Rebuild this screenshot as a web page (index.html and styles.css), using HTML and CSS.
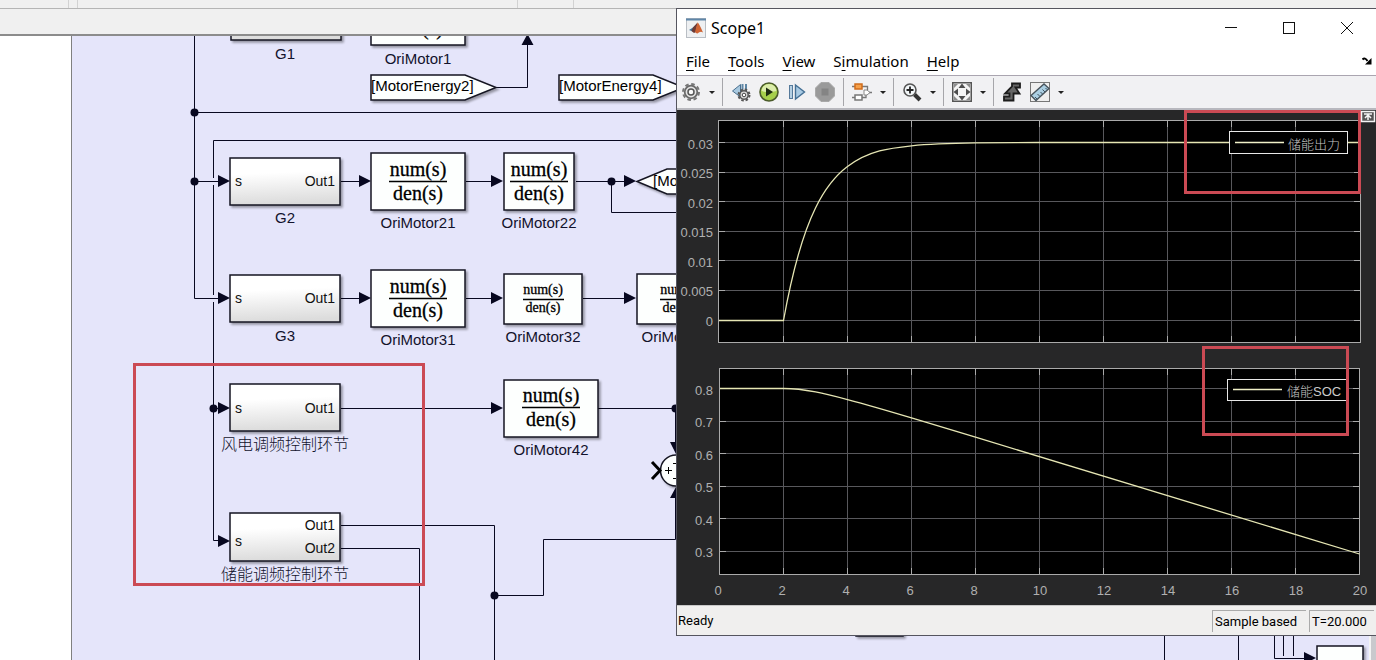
FILE: index.html
```html
<!DOCTYPE html>
<html lang="zh-CN">
<head>
    <meta charset="UTF-8">
    <meta name="viewport" content="width=device-width, initial-scale=1.0">
    <title>Scope1</title>
    <link rel="stylesheet" href="styles.css">
</head>
<body>
    <div class="editor">
        <header class="top-strip">
            <span class="strip-cell cell-a"></span>
            <span class="strip-cell cell-b"></span>
            <span class="strip-cell cell-c"></span>
            <span class="strip-cell cell-d"></span>
        </header>
        <div class="path-bar"></div>

        <div class="workspace">
            <aside class="palette"></aside>
            <main class="canvas">
                <svg class="diagram" role="img" aria-label="Model">
                    <defs>
                        <linearGradient id="blockFill" x1="0" y1="0" x2="0.1" y2="1">
                            <stop offset="0.35" stop-color="#ffffff"/>
                            <stop offset="1" stop-color="#dcdcdc"/>
                        </linearGradient>
                        <path id="arrowRight" d="M0 0L-12 -6V6Z"/>
                    </defs>
                    <g transform="translate(-72 -36)">
                        <!-- signal lines -->
                        <g class="wires">
                            <path d="M213.5 540.5V140.5H700M213.5 540.5H220"/>
                            <path class="gap" d="M213.5 178V185M213.5 295V302"/>
                            <path d="M194.5 30V298.5H220M194.5 112.5H700M194.5 181.5H220"/>
                            <path d="M496 87.5H527.5V40"/>
                            <path d="M341 181.5H362M466 181.5H495M576 181.5H628M611.5 181.5V212.5H700"/>
                            <path d="M341 298.5H362M466 298.5H495M583 298.5H628"/>
                            <path d="M213 408.5H220M341 408.5H495M598 408.5H675.5V446"/>
                            <path d="M341 525.5H494.5V1400M341 548.5H419.5V1400"/>
                            <path d="M494.5 595.5H543.5V539.5H675.5V494"/>
                            <path d="M1164.5 620V1400M1238.5 620V1400M1274.5 620V658.5H1306M1283.5 620V656M1293.5 620V656"/>
                        </g>
                        <g class="solid">
                            <circle cx="194.5" cy="112.5" r="4"/>
                            <circle cx="194.5" cy="181.5" r="4"/>
                            <circle cx="611.5" cy="181.5" r="4"/>
                            <circle cx="213.5" cy="408.5" r="4"/>
                            <circle cx="675.5" cy="408.5" r="4"/>
                            <circle cx="494.5" cy="595.5" r="4"/>
                            <use href="#arrowRight" x="230" y="181"/>
                            <use href="#arrowRight" x="230" y="298"/>
                            <use href="#arrowRight" x="230" y="408"/>
                            <use href="#arrowRight" x="230" y="541"/>
                            <use href="#arrowRight" x="371" y="181"/>
                            <use href="#arrowRight" x="371" y="298"/>
                            <use href="#arrowRight" x="503" y="181"/>
                            <use href="#arrowRight" x="503" y="298"/>
                            <use href="#arrowRight" x="503" y="408"/>
                            <use href="#arrowRight" x="636" y="181"/>
                            <use href="#arrowRight" x="636" y="298"/>
                            <use href="#arrowRight" x="1316" y="658"/>
                            <path d="M527.500 34L521.500 45H533.500ZM676 454L670 442H682ZM676 487L670 498H682Z"/>
                        </g>

                        <!-- subsystem blocks -->
                        <g class="block subsystem">
                            <rect x="231" y="-7" width="110" height="47"/>
                            <rect x="230" y="158" width="110" height="47"/>
                            <rect x="230" y="275" width="110" height="47"/>
                            <rect x="230" y="384" width="110" height="47"/>
                            <rect x="230" y="513" width="110" height="48"/>
                        </g>
                        <g class="port">
                            <text x="235" y="186">s</text>
                            <text x="235" y="303">s</text>
                            <text x="235" y="413">s</text>
                            <text x="235" y="546">s</text>
                            <g class="end">
                                <text x="335" y="186">Out1</text>
                                <text x="335" y="303">Out1</text>
                                <text x="335" y="413">Out1</text>
                                <text x="335" y="530">Out1</text>
                                <text x="335" y="553">Out2</text>
                            </g>
                        </g>

                        <!-- transfer functions -->
                        <g class="block">
                            <rect x="371" y="-12" width="94" height="57"/>
                            <rect x="371" y="153" width="94" height="57"/>
                            <rect x="504" y="153" width="70" height="57"/>
                            <rect x="371" y="270" width="94" height="57"/>
                            <rect x="504" y="274" width="78" height="50"/>
                            <rect x="637" y="274" width="78" height="50"/>
                            <rect x="504" y="380" width="94" height="57"/>
                            <rect x="856" y="590" width="47" height="46"/>
                            <rect x="1317" y="646" width="46" height="46"/>
                            <path d="M371 75H465L496 87.500L465 100H371Z"/>
                            <path d="M559 75H653L684 87.500L653 100H559Z"/>
                            <path d="M637 181.500L667 169H720V194H667Z"/>
                            <circle cx="676" cy="470.500" r="15.500"/>
                        </g>
                        <g class="fraction">
                            <text x="418" y="35">den(s)</text>
                            <text x="418" y="176">num(s)</text>
                            <text x="418" y="200">den(s)</text>
                            <text x="539" y="176">num(s)</text>
                            <text x="539" y="200">den(s)</text>
                            <text x="418" y="293">num(s)</text>
                            <text x="418" y="317">den(s)</text>
                            <text x="551" y="402">num(s)</text>
                            <text x="551" y="426">den(s)</text>
                            <g class="small">
                                <text x="543" y="294">num(s)</text>
                                <text x="543" y="312">den(s)</text>
                                <text x="680" y="294">num(s)</text>
                                <text x="680" y="312">den(s)</text>
                            </g>
                            <path d="M389 181.500H447M510 181.500H568M389 298.500H447M522 407.500H580M523 299.500H564M660 299.500H701"/>
                        </g>
                        <g class="tag">
                            <text x="371" y="91">[MotorEnergy2]</text>
                            <text x="559" y="91">[MotorEnergy4]</text>
                            <text x="653" y="186">[MotorEnergy2]</text>
                        </g>
                        <path class="open-port" d="M652 462L660 470.500L652 479"/>
                        <path class="signs" d="M665 470.500H672M668.500 467V474M673 463.500H680M673 478.500H680"/>

                        <g class="name">
                            <text x="285" y="59">G1</text>
                            <text x="285" y="223">G2</text>
                            <text x="285" y="341">G3</text>
                            <text x="418" y="64">OriMotor1</text>
                            <text x="418" y="228">OriMotor21</text>
                            <text x="539" y="228">OriMotor22</text>
                            <text x="418" y="345">OriMotor31</text>
                            <text x="543" y="342">OriMotor32</text>
                            <text x="679" y="342">OriMotor33</text>
                            <text x="551" y="455">OriMotor42</text>
                            <text class="cjk" x="285" y="450">风电调频控制环节</text>
                            <text class="cjk" x="285" y="580">储能调频控制环节</text>
                        </g>
                        <rect class="mark" x="134.5" y="364.5" width="289" height="220"/>
                    </g>
                </svg>
            </main>
            <div class="scrollbar"></div>
        </div>
    </div>

    <section class="scope">
        <div class="title-bar">
            <svg class="app-icon" width="20" height="20" viewBox="0 0 20 20">
                <rect x="0.5" y="0.5" width="19" height="19" fill="#eef0f2" stroke="#b9bec4"/>
                <path d="M0 1.500H20" stroke="#5f86a8" stroke-width="2"/>
                <path d="M3 12L7 9.500L9.500 7L8 14Z" fill="#3f7399"/>
                <path d="M7 9.500L11.500 4.500L10 14L8 15L5.500 13Z" fill="#6d3a35"/>
                <path d="M11.500 4.500Q13 5 17 14.500Q14.500 12.500 11.500 15.500Q10.500 15.500 9 14Z" fill="#cf6434"/>
            </svg>
            <h1>Scope1</h1>
            <div class="window-buttons">
                <button aria-label="Minimize"><svg width="12" height="12"><path d="M0 5.500H12"/></svg></button>
                <button aria-label="Maximize"><svg width="12" height="12"><rect x="0.5" y="0.5" width="11" height="11"/></svg></button>
                <button aria-label="Close"><svg width="12" height="12"><path d="M0 0L12 12M12 0L0 12"/></svg></button>
            </div>
        </div>

        <nav class="menu-bar">
            <button><u>F</u>ile</button>
            <button><u>T</u>ools</button>
            <button><u>V</u>iew</button>
            <button>S<u>i</u>mulation</button>
            <button><u>H</u>elp</button>
            <svg class="undock" width="10" height="8" viewBox="0 0 10 8"><path d="M0.500 2.500Q3 0 5.500 4" fill="none" stroke="#000" stroke-width="2"/><path d="M9.500 1V7.500H3Z"/></svg>
        </nav>

        <div class="toolbar">
            <button class="tool" aria-label="Configuration">
                <svg width="20" height="20" viewBox="0 0 20 20">
                    <circle cx="10" cy="10" r="8" fill="none" stroke="#777" stroke-width="2" stroke-dasharray="3.600 2.683"/>
                    <circle cx="10" cy="10" r="6.300" fill="#e4e4e4" stroke="#6b6b6b" stroke-width="1.800"/>
                    <circle cx="10" cy="10" r="3" fill="#fafafa" stroke="#555" stroke-width="1.500"/>
                </svg>
            </button>
            <button class="caret" aria-label="Configuration menu"></button>
            <span class="separator"></span>
            <button class="tool" aria-label="Step back">
                <svg width="20" height="20" viewBox="0 0 20 20">
                    <path d="M1.500 9L9.500 2.500V15Z" fill="#a8c8df" stroke="#49708f"/>
                    <path d="M11.500 2V9M15 2V9" stroke="#5e86a5" stroke-width="2"/>
                    <circle cx="13" cy="13" r="5.500" fill="none" stroke="#555" stroke-width="2" stroke-dasharray="2.500 1.820"/>
                    <circle cx="13" cy="13" r="4.200" fill="#ddd" stroke="#555" stroke-width="1.500"/>
                    <circle cx="13" cy="13" r="1.800" fill="#fff" stroke="#444"/>
                </svg>
            </button>
            <button class="tool" aria-label="Run">
                <svg width="20" height="20" viewBox="0 0 20 20">
                    <circle cx="10" cy="10" r="9" fill="#a6cf4b" stroke="#4b5b2b" stroke-width="1.600"/>
                    <path d="M2.500 9A7.500 7 0 0 1 17.500 9Q10 11 2.500 9Z" fill="#dcedab"/>
                    <path d="M7 5.500L14 10L7 14.500Z" fill="#1e2b12"/>
                </svg>
            </button>
            <button class="tool" aria-label="Step forward">
                <svg width="20" height="20" viewBox="0 0 20 20">
                    <rect x="2.500" y="3.500" width="3" height="13" fill="#b4cfe3" stroke="#55799a"/>
                    <path d="M8.500 3L17.500 10L8.500 17Z" fill="#a9cae3" stroke="#446f94" stroke-width="1.400"/>
                </svg>
            </button>
            <button class="tool" aria-label="Stop" disabled>
                <svg width="20" height="20" viewBox="0 0 20 20">
                    <path d="M6 0.500H14L19.500 6V14L14 19.500H6L0.500 14V6Z" fill="#9a9a9a" stroke="#a9a9a9"/>
                    <rect x="6.500" y="6.500" width="7" height="7" fill="#848484"/>
                </svg>
            </button>
            <span class="separator"></span>
            <button class="tool" aria-label="Highlight block">
                <svg width="20" height="20" viewBox="0 0 20 20" fill="none">
                    <path d="M0 4.500H3M10 4.500H15.500V8M17 10.500H20M14 12.500V15.500H10M0 15.500H3" stroke="#777" stroke-width="1.300"/>
                    <rect x="3" y="2" width="7" height="5" fill="#f5a04a" stroke="#cf6c1b" stroke-width="1.500"/>
                    <rect x="3" y="13" width="7" height="5" fill="#fff" stroke="#777" stroke-width="1.500"/>
                    <path d="M12 8H15L18 10.500L15 13H12Z" fill="#fff" stroke="#888"/>
                </svg>
            </button>
            <button class="caret" aria-label="Highlight menu"></button>
            <span class="separator"></span>
            <button class="tool" aria-label="Zoom">
                <svg width="20" height="20" viewBox="0 0 20 20" fill="none">
                    <path d="M12.500 12.500L18 18" stroke="#333" stroke-width="4"/>
                    <circle cx="8" cy="8" r="6" fill="#f2f6f8" stroke="#555" stroke-width="1.600"/>
                    <path d="M4.500 8H11.500M8 4.500V11.500" stroke="#222" stroke-width="1.800"/>
                </svg>
            </button>
            <button class="caret" aria-label="Zoom menu"></button>
            <span class="separator"></span>
            <button class="tool" aria-label="Fit to view">
                <svg width="20" height="20" viewBox="0 0 20 20">
                    <rect x="0.750" y="0.750" width="18.500" height="18.500" fill="#f4f4f4" stroke="#555" stroke-width="1.500"/>
                    <path d="M10 1.500L13.500 6H6.500ZM10 18.500L13.500 14H6.500ZM1.500 10L6 6.500V13.500ZM18.500 10L14 6.500V13.500Z" fill="#4d4d4d"/>
                    <path d="M2 2H6L2 6ZM18 2V6L14 2ZM2 18V14L6 18ZM18 18H14L18 14Z" fill="#8c8c8c"/>
                </svg>
            </button>
            <button class="caret" aria-label="Fit menu"></button>
            <span class="separator"></span>
            <button class="tool" aria-label="Triggers">
                <svg width="20" height="20" viewBox="0 0 20 20">
                    <path d="M2 14.500H7.500V11.500H3L10 4.500V1.500H18V5.500H13.500L17.500 11.500H11.500V18.500H2Z" fill="#666" stroke="#1c1c1c" stroke-width="1.800"/>
                </svg>
            </button>
            <button class="tool" aria-label="Cursor measurements">
                <svg width="20" height="20" viewBox="0 0 20 20">
                    <rect x="0.500" y="0.500" width="19" height="19" fill="#efefef" stroke="#777"/>
                    <path d="M1 13.500L14 2L19 6.500L6 18.500Z" fill="#abcfe3" stroke="#47535c" stroke-width="1.400"/>
                    <path d="M7 17L5 15M10 14.500L7.500 12M12.500 12L10.500 10M15 10L12.500 7.500M17 7.500L15.500 6" stroke="#3f5360"/>
                </svg>
            </button>
            <button class="caret" aria-label="Measurements menu"></button>
        </div>

        <div class="plots">
            <svg viewBox="0 0 699 495" role="img" aria-label="Scope display">
                <rect class="axes-fill" x="41.500" y="10.500" width="642" height="222"/>
                <path class="grid" d="M106.500 10V232M170.500 10V232M234.500 10V232M298.500 10V232M362.500 10V232M426.500 10V232M490.500 10V232M554.500 10V232M618.500 10V232
                    M42 32.500H683M42 62.500H683M42 91.500H683M42 121.500H683M42 150.500H683M42 180.500H683M42 210.500H683"/>
                <path class="ticks" d="M106.500 10V17M170.500 10V17M234.500 10V17M298.500 10V17M362.500 10V17M426.500 10V17M490.500 10V17M554.500 10V17M618.500 10V17
                    M106.500 226V232M170.500 226V232M234.500 226V232M298.500 226V232M362.500 226V232M426.500 226V232M490.500 226V232M554.500 226V232M618.500 226V232
                    M42 32.500H48M42 62.500H48M42 91.500H48M42 121.500H48M42 150.500H48M42 180.500H48M42 210.500H48
                    M677 32.500H683M677 62.500H683M677 91.500H683M677 121.500H683M677 150.500H683M677 180.500H683M677 210.500H683"/>
                <rect class="axes" x="41.500" y="10.500" width="642" height="222"/>
                <path class="curve" d="M42 210.500H106.500C117.200 151.200 127.800 119.800 138.500 98S159.800 64.600 170.500 56.600C191.800 40.500 213.200 38 234.500 35.800C255.800 33.600 277.200 33.200 298.500 32.900L362.500 32.500H683"/>

                <rect class="axes-fill" x="42.500" y="258.500" width="640" height="206"/>
                <path class="grid" d="M106.500 259V464M170.500 259V464M234.500 259V464M298.500 259V464M362.500 259V464M426.500 259V464M490.500 259V464M554.500 259V464M618.500 259V464
                    M42 278.500H682M42 311.500H682M42 343.500H682M42 376.500H682M42 408.500H682M42 441.500H682"/>
                <path class="ticks" d="M106.500 259V265M170.500 259V265M234.500 259V265M298.500 259V265M362.500 259V265M426.500 259V265M490.500 259V265M554.500 259V265M618.500 259V265
                    M106.500 458V464M170.500 458V464M234.500 458V464M298.500 458V464M362.500 458V464M426.500 458V464M490.500 458V464M554.500 458V464M618.500 458V464
                    M43 278.500H49M43 311.500H49M43 343.500H49M43 376.500H49M43 408.500H49M43 441.500H49
                    M676 278.500H682M676 311.500H682M676 343.500H682M676 376.500H682M676 408.500H682M676 441.500H682"/>
                <rect class="axes" x="42.500" y="258.500" width="640" height="206"/>
                <path class="curve" d="M43 278.500H106.500C127.800 278.500 149.200 284 170.500 289.600S213.200 301.500 234.500 307.900L298.500 327.200L682.500 444"/>

                <g class="tick-label end">
                    <text x="36" y="39">0.03</text>
                    <text x="36" y="68">0.025</text>
                    <text x="36" y="98">0.02</text>
                    <text x="36" y="127">0.015</text>
                    <text x="36" y="157">0.01</text>
                    <text x="36" y="186">0.005</text>
                    <text x="36" y="216">0</text>
                    <text x="36" y="285">0.8</text>
                    <text x="36" y="317">0.7</text>
                    <text x="36" y="350">0.6</text>
                    <text x="36" y="382">0.5</text>
                    <text x="36" y="415">0.4</text>
                    <text x="36" y="447">0.3</text>
                </g>
                <g class="tick-label middle">
                    <text x="41" y="485">0</text>
                    <text x="105" y="485">2</text>
                    <text x="169" y="485">4</text>
                    <text x="233" y="485">6</text>
                    <text x="297" y="485">8</text>
                    <text x="363" y="485">10</text>
                    <text x="427" y="485">12</text>
                    <text x="491" y="485">14</text>
                    <text x="555" y="485">16</text>
                    <text x="619" y="485">18</text>
                    <text x="683" y="485">20</text>
                </g>

                <g class="legend">
                    <rect x="552.500" y="21.500" width="118" height="22"/>
                    <path d="M558 32.500H607"/>
                    <text x="611" y="39">储能出力</text>
                    <rect x="550.500" y="269.500" width="120" height="21"/>
                    <path d="M556 279.500H605"/>
                    <text x="610" y="286">储能<tspan class="latin">SOC</tspan></text>
                </g>

                <rect class="mark" x="508.500" y="1.500" width="174" height="81"/>
                <rect class="mark" x="526.500" y="237.500" width="144" height="87"/>
                <g class="expand">
                    <rect x="684.500" y="1.500" width="13" height="10"/>
                    <path d="M687 4H695M691 5V10M688 8L691 5L694 8"/>
                </g>
            </svg>
        </div>

        <footer class="status-bar">
            <span class="status">Ready</span>
            <span class="field">Sample based</span>
            <span class="field time">T=20.000</span>
        </footer>
    </section>
</body>
</html>
```
FILE: styles.css
```css
:root {
    --chrome: #f0f0f0;
    --canvas: #e5e5fa;
    --ink: #080820;
    --mark: #cb4a54;
    --font-ui: "Noto Sans", "Noto Sans CJK SC", sans-serif;
    --font-block: "Liberation Sans", "Noto Sans CJK SC", sans-serif;
}

* {
    box-sizing: border-box;
    margin: 0;
    padding: 0;
}

body {
    position: relative;
    min-height: 100vh;
    overflow: hidden;
    font-family: var(--font-ui);
    background: white;
}

button {
    border: none;
    background: none;
    font: inherit;
    color: inherit;
}

.editor {
    display: flex;
    flex-direction: column;
    height: 100vh;
}

.top-strip {
    display: flex;
    height: 9px;
    background: var(--chrome);
    border-bottom: 1px solid #b5b5b5;
}

.strip-cell {
    border-right: 1px solid #d2d2d2;
}

.cell-a {
    width: 69px;
}

.cell-b {
    width: 9px;
}

.cell-c {
    width: 440px;
}

.cell-d {
    width: 56px;
}

.path-bar {
    height: 27px;
    background: var(--chrome);
    border-bottom: 2px solid #8c8c8c;
}

.workspace {
    display: flex;
    flex: 1;
    min-height: 0;
}

.palette {
    width: 72px;
    background: white;
    border-right: 1px solid #808080;
}

.canvas {
    flex: 1;
    min-width: 0;
    background: var(--canvas);
}

.scrollbar {
    width: 7px;
    background: #c9c9cd;
    border-left: 2px solid #f4f4f4;
}

/* block diagram */
.diagram {
    display: block;
    width: 100%;
    height: 100%;
    font-family: var(--font-block);
}

.wires {
    fill: none;
    stroke: var(--ink);
    stroke-width: 1;
}

.wires .gap {
    stroke: var(--canvas);
    stroke-width: 3;
}

.solid {
    fill: var(--ink);
}

.block {
    fill: #fdfffe;
    stroke: #151522;
    stroke-width: 1.5px;
    filter: drop-shadow(2px 2px 1px rgba(0, 0, 0, 0.35));
}

.subsystem {
    fill: url(#blockFill);
}

.port {
    font-size: 14px;
    fill: #111;
}

.end {
    text-anchor: end;
}

.middle {
    text-anchor: middle;
}

.fraction {
    font-family: "Liberation Serif", serif;
    font-size: 20px;
    text-anchor: middle;
    stroke: #000;
    stroke-width: 0.3px;
}

.fraction .small {
    font-size: 14px;
}

.fraction path {
    stroke-width: 1.5px;
}

.tag {
    font-size: 15px;
}

.name {
    font-size: 15px;
    text-anchor: middle;
    fill: #12122c;
}

.name .cjk {
    font-family: "Noto Sans CJK SC", sans-serif;
    font-size: 16px;
    font-weight: 300;
}

.open-port {
    fill: none;
    stroke: #000;
    stroke-width: 3;
}

.signs {
    stroke: #000;
}

.mark {
    fill: none;
    stroke: var(--mark);
    stroke-width: 3;
}

/* scope window */
.scope {
    position: absolute;
    top: 8px;
    left: 676px;
    right: 0;
    display: flex;
    flex-direction: column;
    background: white;
    border: 1px solid #55555f;
    border-right: none;
}

.title-bar {
    display: flex;
    align-items: center;
    height: 37px;
    padding-left: 9px;
}

.title-bar h1 {
    flex: 1;
    margin-left: 5px;
    font-size: 16px;
    font-weight: 400;
}

.window-buttons {
    display: flex;
}

.window-buttons button {
    width: 58px;
    height: 36px;
}

.window-buttons svg {
    fill: none;
    stroke: #111;
    stroke-width: 1;
}

.menu-bar {
    display: flex;
    align-items: center;
    height: 30px;
    font-size: 15px;
    border-bottom: 1px solid #aaa5b0;
}

.menu-bar button {
    padding: 0 9px;
    line-height: 28px;
}

.menu-bar u {
    text-underline-offset: 3px;
}

.undock {
    margin-left: auto;
    margin-right: 4px;
}

.toolbar {
    display: flex;
    align-items: center;
    height: 34px;
    background: #f1f1f3;
    border-bottom: 2px solid #b8b8be;
}

.tool {
    display: flex;
    justify-content: center;
    width: 28px;
}

.caret {
    width: 13px;
    height: 20px;
}

.caret::before {
    content: "";
    display: block;
    margin: 0 auto;
    width: 0;
    border: 3px solid transparent;
    border-top-color: #222;
    border-bottom: none;
}

.separator {
    width: 1px;
    height: 28px;
    margin: 0 4px;
    background: #a6a6aa;
}

.plots {
    background: #272728;
}

.plots svg {
    display: block;
    width: 100%;
    font-family: var(--font-block);
    font-size: 13px;
}

.axes-fill {
    fill: #000;
}

.axes,
.ticks {
    fill: none;
    stroke: #aaa;
}

.grid {
    stroke: #58585c;
}

.curve {
    fill: none;
    stroke: #e6e6b4;
    stroke-width: 1.3px;
}

.tick-label {
    fill: #b0b0b0;
}

.legend rect {
    fill: #000;
    stroke: #e8e8e8;
}

.legend path {
    stroke: #f0f0c8;
    stroke-width: 1.5px;
}

.legend text {
    font-family: "Noto Sans CJK SC", sans-serif;
    font-weight: 300;
    fill: #c4c4c4;
}

.legend .latin {
    font-family: "Liberation Sans", sans-serif;
    font-weight: 400;
    fill: #ccc;
}

.expand {
    fill: #555;
    stroke: #f4f4f4;
    stroke-width: 1.5px;
}

.status-bar {
    display: flex;
    align-items: center;
    gap: 3px;
    height: 30px;
    padding-right: 2px;
    background: #f0efee;
    border-top: 1px solid #c8c8c8;
    font-family: Roboto, sans-serif;
    font-size: 13px;
}

.status {
    flex: 1;
    padding-left: 1px;
}

.field {
    width: 94px;
    padding-left: 2px;
    line-height: 21px;
    border-top: 1px solid #aaa;
    border-left: 1px solid #aaa;
    white-space: nowrap;
}

.time {
    width: 65px;
}
```
